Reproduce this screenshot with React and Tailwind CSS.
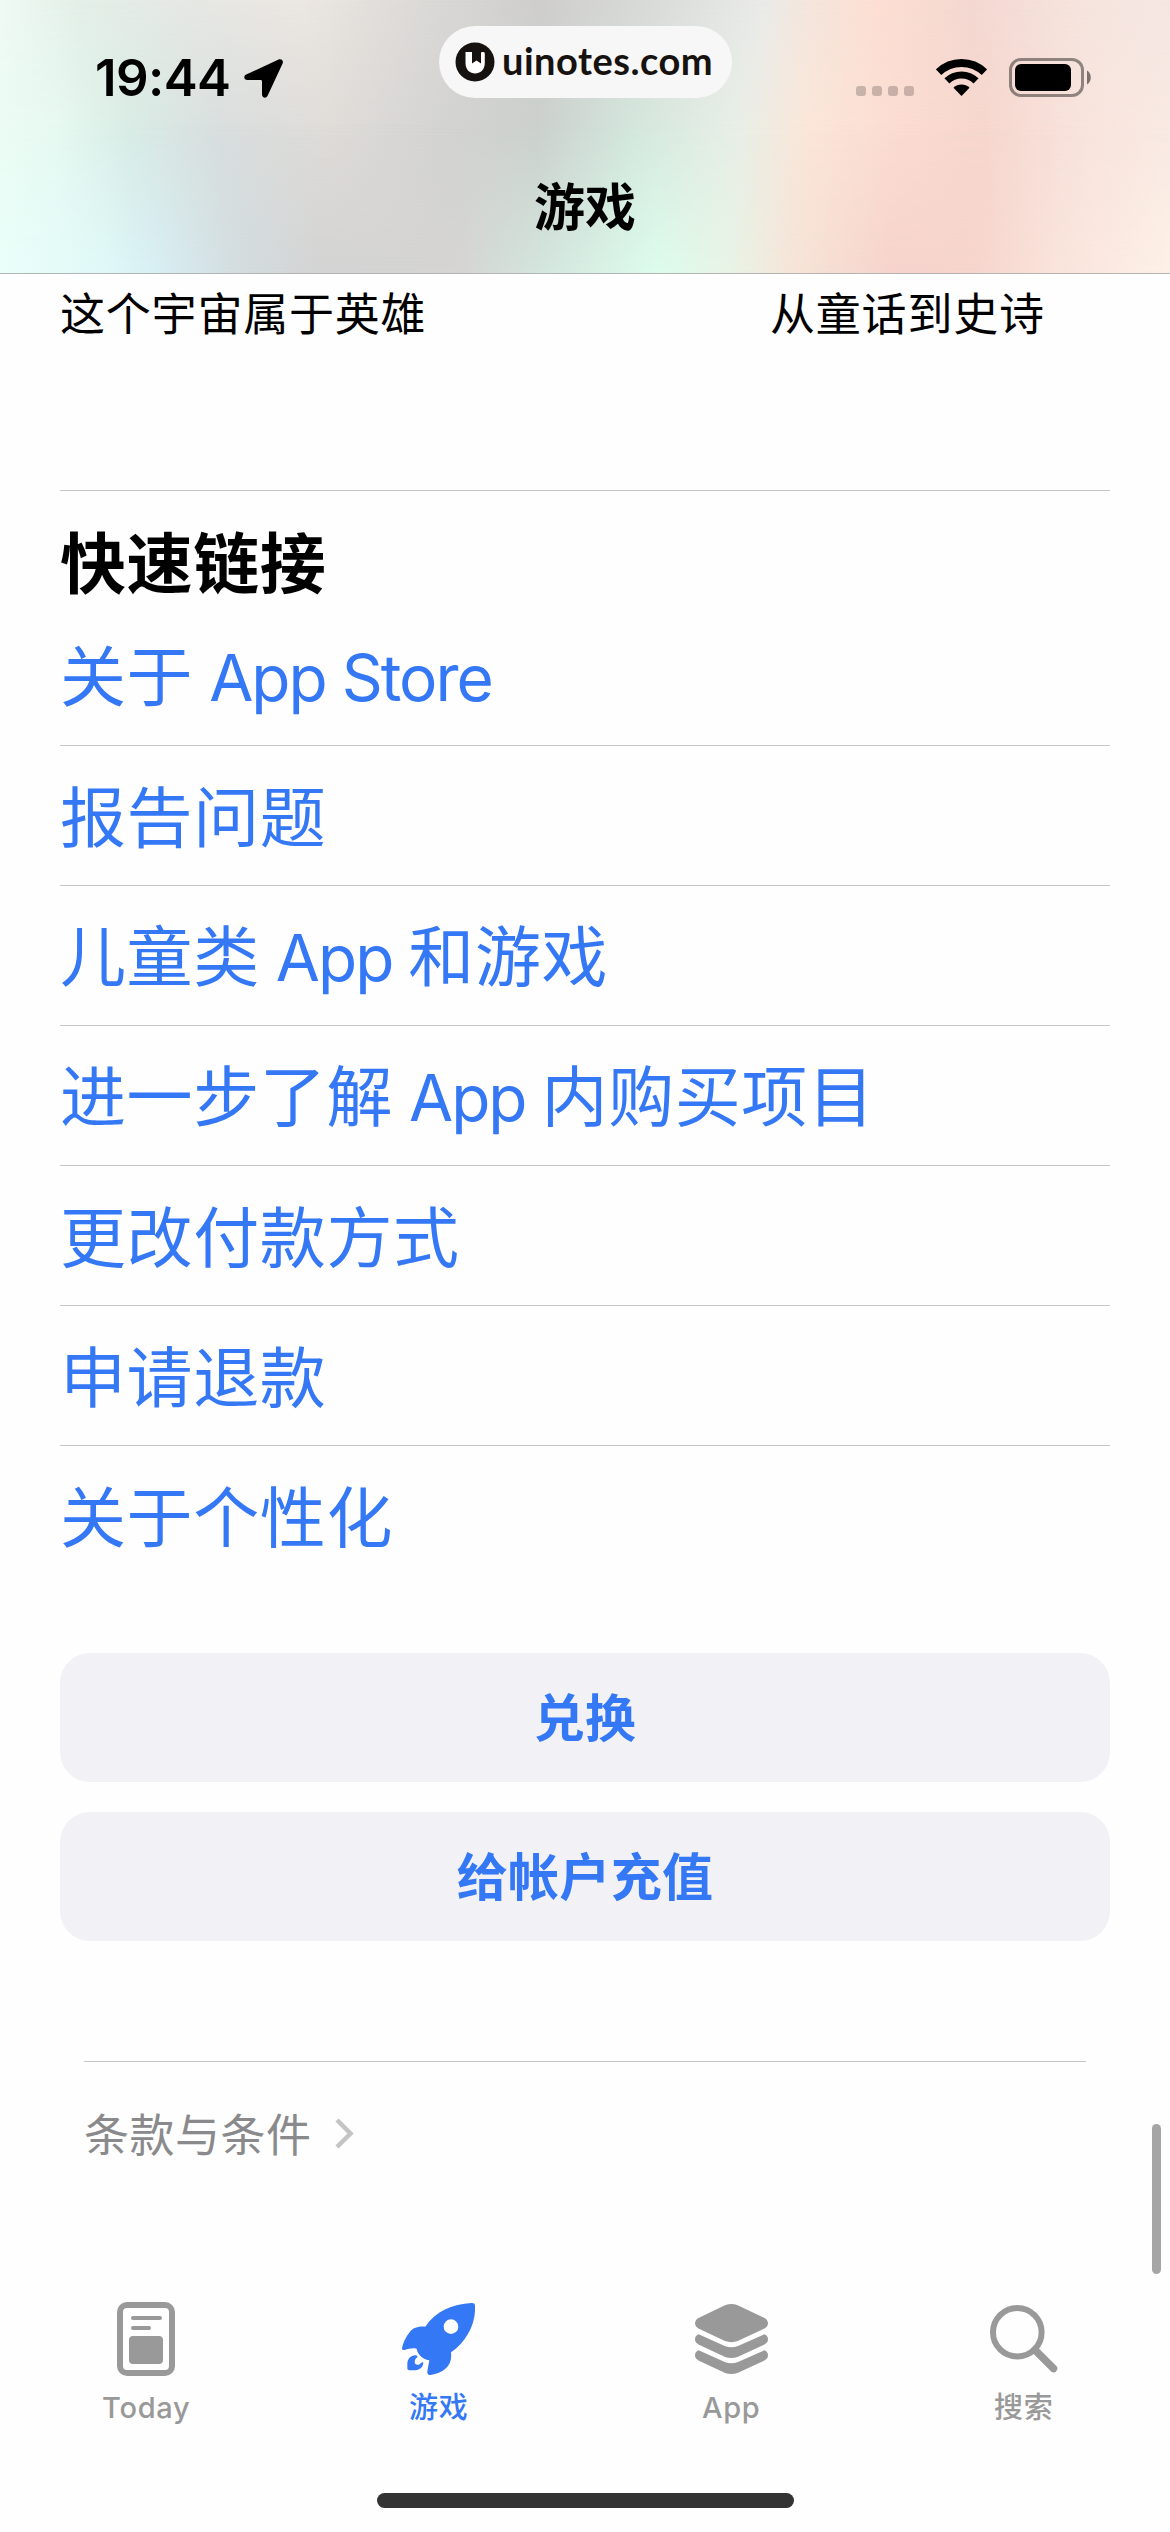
const links = [
    '关于 App Store',
    '报告问题',
    '儿童类 App 和游戏',
    '进一步了解 App 内购买项目',
    '更改付款方式',
    '申请退款',
    '关于个性化',
];

function StatusBar() {
    return (
        <div className="flex h-[96px] items-start pl-[95px] pr-[79px] pt-[26px]">
            <div className="flex h-[104px] w-[344px] items-start">
                <span className="mt-[26px] text-[51px] leading-[51px] font-semibold tracking-[-0.6px]">19:44</span>
                <svg className="mt-[33px] ml-[14px] h-[39px] w-[39px]" viewBox="0 0 39 39">
                    <path d="M2.2 15.6 34.6.5C37.4-.7 39.8 1.7 38.6 4.5L23.6 36.8C22.2 40 18 39 18 35.6V22.2Q18 21 16.800 21H3.400C0 21-1 17 2.200 15.600Z" />
                </svg>
            </div>
            <div className="flex h-[72px] w-[293px] items-center rounded-full bg-[#f7f7f7] pl-[16px] text-[#16120f]">
                <svg className="h-[40px] w-[40px]" viewBox="0 0 40 40">
                    <circle cx="20" cy="20" r="19.500" fill="currentColor" />
                    <path d="M10.500 10H17V21.500L21.500 18.500 26 21.500V11Q26 10 27 10H28.500Q29.800 10 29.800 11.500V21C29.800 35 10.500 35 10.500 21Z" fill="#fff" />
                </svg>
                <span className="mb-[5px] ml-[7px] font-['Lato'] text-[38px] leading-none font-bold tracking-[0.5px]">uinotes.com</span>
            </div>
            <div className="ml-auto flex items-start">
                <div className="mt-[60px] flex gap-[6px]">
                    {[0, 1, 2, 3].map((dot) => (
                        <div key={dot} className="h-[10px] w-[10px] rounded-[3px] bg-black/20" />
                    ))}
                </div>
                <svg className="mt-[33px] ml-[22px] h-[37px] w-[51px]" viewBox="0 0 51 37">
                    <path d="M2.580 13.260A33 33 0 0 1 48.420 13.260" fill="none" stroke="#000" strokeWidth="7.800" />
                    <path d="M10.910 21.890A21 21 0 0 1 40.090 21.890" fill="none" stroke="#000" strokeWidth="7.200" />
                    <path d="M25.500 37 17.500 28.700A11.500 11.500 0 0 1 33.500 28.700Z" />
                </svg>
                <svg className="mt-[32px] ml-[22px] h-[39px] w-[82px]" viewBox="0 0 82 39">
                    <rect x="1.500" y="1.500" width="72" height="36" rx="10.500" fill="none" stroke="#000" strokeOpacity=".42" strokeWidth="3" />
                    <rect x="6" y="6" width="56" height="27" rx="6" />
                    <path d="M78 12.500C83 15 83 24 78 26.500Z" fillOpacity=".5" />
                </svg>
            </div>
        </div>
    );
}

// Colours of the artwork scrolled under the bar, three bands faded into each other
function Header() {
    return (
        <header className="relative h-[274px] border-b border-[#b4b4b4]">
            <div className="absolute inset-0 bg-[linear-gradient(90deg,#effaf3_0%,#e3efe7_7%,#e6e8e4_16%,#ece7e2_26%,#dcdad7_36%,#cfcecd_46%,#d8dad8_55%,#eaebe9_65%,#f4e6dd_69%,#fddfd3_75%,#f4d8d1_83%,#f6e4de_92%,#f6e7e2_100%)]" />
            <div className="absolute inset-0 bg-[linear-gradient(90deg,#ebfcf4_0%,#e6f9f1_5%,#d8ece5_11%,#d8dddd_19%,#dfdcd8_28%,#d3d3d2_38%,#cbd0cc_46%,#d3e7dc_54%,#e8efe7_63%,#fbe6d9_69%,#fbdcd1_77%,#f6d7ce_84%,#f8e4dd_93%,#f9e9e3_100%)] [mask-image:linear-gradient(transparent,#000_50%)]" />
            <div className="absolute inset-0 bg-[linear-gradient(90deg,#eafff9_0%,#dff8f8_9%,#d8eff4_13%,#d3dde0_20%,#d3d3d3_27%,#d5d4d3_39%,#d3e5dc_46%,#dcfcec_56%,#e7f4e6_62%,#f6e3d7_68%,#f6d3cc_76%,#f6d4cc_83%,#f9e3da_90%,#fdf0e7_100%)] [mask-image:linear-gradient(transparent_45%,#000)]" />
            <div className="relative">
                <StatusBar />
                <h1 className="mt-[86px] text-center text-[51px] leading-[51px] font-semibold">游戏</h1>
            </div>
        </header>
    );
}

// Latin words, with the spaces round them, sit a touch tighter than the Chinese
function MixedText({ text }) {
    return text.split(/([A-Za-z ]+)/).map((part, i) =>
        i % 2 ? (
            <span key={i} className="text-[64px] tracking-[-2px]">{part}</span>
        ) : (
            part
        )
    );
}

function TodayIcon() {
    return (
        <svg className="h-[74px] w-[58px]" viewBox="0 0 58 74" fill="currentColor">
            <rect x="3" y="3" width="52" height="68" rx="7" fill="none" stroke="currentColor" strokeWidth="6" />
            <rect x="14" y="14" width="31" height="4" rx="2" />
            <rect x="14" y="24" width="20" height="4" rx="2" />
            <rect x="12" y="34" width="34" height="28" rx="4" />
        </svg>
    );
}

function RocketIcon() {
    return (
        <svg className="h-[72px] w-[73px]" viewBox="0 0 219 216" fill="currentColor">
            <path fillRule="evenodd" d="M209 0C150 3 100 25 70 71 48 70 35 74 24 86 10 103 3 120 0 135 0 141 4 142 8 141 20 137 32 134 44 137 46 152 60 168 82 172L76 205C75 214 80 217 86 216 125 209 152 190 147 148 195 115 222 60 219 8 219 2 216 0 209 0ZM147 49A22 22 0 1 1 147 93 22 22 0 1 1 147 49Z" />
            <path d="M38 157C22 160 16 170 16 185V196Q16 202 22 202H34C52 202 62 195 64 180 64 176 58 178 55 182 48 188 38 186 38 178 38 170 42 166 46 163 48 158 44 156 38 157Z" />
        </svg>
    );
}

function StackIcon() {
    return (
        <svg className="h-[71px] w-[73px]" viewBox="0 0 219 213" fill="currentColor">
            <path d="M90 4Q109-4 128 4L207 41Q219 47 219 58 219 68 207 74L128 111Q109 118 90 111L12 74Q0 68 0 58 0 47 12 41Z" />
            <path d="M11 91 89 126Q109 134 129 126L208 91Q219 95 219 106 219 117 207 122L129 158Q109 166 89 158L12 122Q0 117 0 106 0 95 11 91Z" />
            <path d="M11 139 89 174Q109 182 129 174L208 139Q219 143 219 154 219 165 207 170L129 206Q109 214 89 206L12 170Q0 165 0 154 0 143 11 139Z" />
        </svg>
    );
}

function SearchIcon() {
    return (
        <svg className="h-[68px] w-[68px]" viewBox="0 0 68 68" fill="none" stroke="currentColor">
            <circle cx="27.300" cy="27.300" r="24.300" strokeWidth="6" />
            <path d="M45 45 63.500 63.500" strokeWidth="7.500" strokeLinecap="round" />
        </svg>
    );
}

const tabs = [
    { label: 'Today', icon: TodayIcon },
    { label: '游戏', icon: RocketIcon, active: true },
    { label: 'App', icon: StackIcon },
    { label: '搜索', icon: SearchIcon },
];

function TabBar() {
    return (
        <nav className="grid grid-cols-4">
            {tabs.map(({ label, icon: Icon, active }) => (
                <div key={label} className={`flex flex-col items-center ${active ? 'text-[#3478f6]' : 'text-[#999999]'}`}>
                    <div className="flex h-[74px] items-center">
                        <Icon />
                    </div>
                    <span className="mt-[17px] text-[29px] leading-[30px] font-medium tracking-[0.7px]">{label}</span>
                </div>
            ))}
        </nav>
    );
}

export default function App() {
    return (
        <div className="relative flex h-[2532px] w-[1170px] flex-col overflow-hidden bg-[#fefefe] font-['Inter','Noto_Sans_CJK_SC',sans-serif] text-black">
            <Header />

            <main className="px-[60px]">
                <div className="flex h-[216px] pt-[18px] text-[45px] leading-[45px] tracking-[0.8px]">
                    <p className="w-[710px]">这个宇宙属于英雄</p>
                    <p>从童话到史诗</p>
                </div>

                <section className="border-t border-[#c6c6c8]">
                    <h2 className="mt-[40px] mb-[9px] text-[66px] leading-[66px] font-semibold tracking-[0.6px]">快速链接</h2>
                    <ul className="divide-y divide-[#c6c6c8]">
                        {links.map((link) => (
                            <li key={link} className="flex h-[140px] items-center pt-[4px] text-[66px] leading-[66px] tracking-[0.6px] whitespace-pre text-[#3478f6]">
                                <a><MixedText text={link} /></a>
                            </li>
                        ))}
                    </ul>
                </section>

                <div className="mt-[67px] flex flex-col gap-[30px]">
                    <button className="h-[129px] rounded-[30px] bg-[#f1f1f6] pt-[3px] text-[51px] font-semibold tracking-[0.3px] text-[#3478f6]">兑换</button>
                    <button className="h-[129px] rounded-[30px] bg-[#f1f1f6] pt-[3px] text-[51px] font-semibold tracking-[0.3px] text-[#3478f6]">给帐户充值</button>
                </div>

                <footer className="mx-[24px] mt-[120px] flex h-[241px] items-start border-t border-[#c6c6c8] pt-[51px]">
                    <span className="text-[45px] leading-[45px] tracking-[0.5px] text-[#8a8a8d]">条款与条件</span>
                    <svg className="mt-[5px] ml-[23px] h-[31px] w-[20px]" viewBox="0 0 20 31" fill="none" stroke="#c4c4c6" strokeWidth="4.500">
                        <path d="M2 2 15.500 15.500 2 29" />
                    </svg>
                </footer>
            </main>

            <TabBar />

            <div className="absolute top-[2124px] right-[9px] h-[150px] w-[9px] rounded-full bg-[#a5a5a5]" />
            <div className="absolute bottom-[24px] left-[377px] h-[15px] w-[417px] rounded-full bg-[#333333]" />
        </div>
    );
}
